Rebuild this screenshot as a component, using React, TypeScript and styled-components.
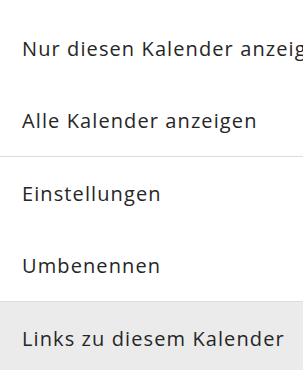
import styled, { createGlobalStyle } from 'styled-components'

const GlobalStyle = createGlobalStyle`
  html, body {
    margin: 0;
    padding: 0;
    background: #fff;
    overflow: hidden;
  }
`

const groups = [
  ['Nur diesen Kalender anzeigen', 'Alle Kalender anzeigen'],
  ['Einstellungen', 'Umbenennen'],
  ['Links zu diesem Kalender'],
]

const App = () => {
  return (
    <>
      <GlobalStyle />
      <Menu>
        {groups.map((items, i) => (
          <Group key={i}>
            {items.map(label => (
              <Item key={label} $active={label === 'Links zu diesem Kalender'}>
                {label}
              </Item>
            ))}
          </Group>
        ))}
      </Menu>
    </>
  )
}

export default App

const Menu = styled.ul`
  list-style: none;
  margin: 0;
  padding: 12px 0 0;
  width: 303px;
  font-family: 'Open Sans', 'Noto Sans', sans-serif;
  color: #262626;
`

const Group = styled.li`
  display: flex;
  flex-direction: column;
  border-bottom: 1px solid #dcdcdc;

  &:last-child {
    border-bottom: none;
  }
`

const Item = styled.div<{ $active?: boolean }>`
  height: 72px;
  display: flex;
  align-items: center;
  padding: 0 22px;
  font-size: 20px;
  letter-spacing: 1.1px;
  white-space: nowrap;
  overflow: hidden;
  background: ${p => (p.$active ? '#ebebeb' : 'transparent')};
`
